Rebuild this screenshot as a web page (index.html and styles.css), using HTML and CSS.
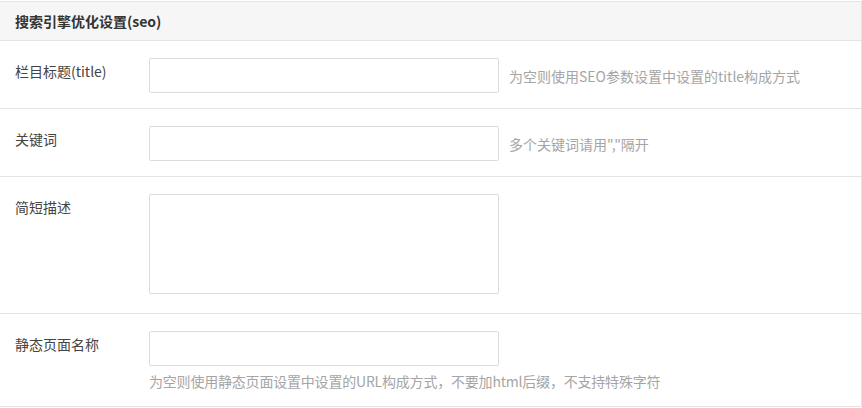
FILE: index.html
```html
<!DOCTYPE html>
<html>
<head>
    <meta charset="utf-8">
    <title>栏目设置</title>
    <link rel="stylesheet" href="styles.css">
</head>
<body>
    <div class="panel">
        <div class="panel-head">搜索引擎优化设置(seo)</div>

        <div class="form-row">
            <label class="form-label">栏目标题(title)</label>
            <div class="form-field">
                <input class="form-input" type="text">
                <span class="form-tip">为空则使用SEO参数设置中设置的title构成方式</span>
            </div>
        </div>

        <div class="form-row">
            <label class="form-label">关键词</label>
            <div class="form-field">
                <input class="form-input" type="text">
                <span class="form-tip">多个关键词请用","隔开</span>
            </div>
        </div>

        <div class="form-row">
            <label class="form-label">简短描述</label>
            <div class="form-field">
                <textarea class="form-input form-textarea"></textarea>
            </div>
        </div>

        <div class="form-row">
            <label class="form-label">静态页面名称</label>
            <div class="form-field form-field-stack">
                <input class="form-input" type="text">
                <span class="form-tip form-tip-below">为空则使用静态页面设置中设置的URL构成方式，不要加html后缀，不支持特殊字符</span>
            </div>
        </div>
    </div>
</body>
</html>
```

FILE: styles.css
```css
body {
    margin: 0;
    background: #fff;
    font-family: "Microsoft YaHei", "Noto Sans CJK SC", "Noto Sans", sans-serif;
    font-size: 14px;
    color: #333;
}

.panel {
    margin: 1px 0 0 -1px;
    border: 1px solid #e4e4e4;
    background: #fff;
}

.panel-head {
    height: 38px;
    line-height: 38px;
    padding-left: 15px;
    background: #f6f6f6;
    border-bottom: 1px solid #e4e4e4;
    font-weight: bold;
    color: #333;
}

.form-row {
    display: flex;
    align-items: flex-start;
    padding: 17px 0 15px;
    border-bottom: 1px solid #e4e4e4;
}

.form-row:last-child {
    border-bottom: none;
}

.form-label {
    width: 134px;
    padding: 3px 0 0 15px;
    line-height: 20px;
    color: #444;
    flex-shrink: 0;
}

.form-field {
    display: flex;
    align-items: center;
}

.form-field-stack {
    flex-direction: column;
    align-items: flex-start;
}

.form-input {
    box-sizing: border-box;
    width: 350px;
    height: 35px;
    margin: 0;
    padding: 0 8px;
    border: 1px solid #dcdcdc;
    border-radius: 2px;
    background: #fff;
    font-family: inherit;
    font-size: 14px;
    outline: none;
}

.form-textarea {
    height: 100px;
    margin-bottom: 4px;
    resize: none;
    display: block;
}

.form-tip {
    margin-left: 10px;
    line-height: 20px;
    color: #a5a5a5;
    white-space: nowrap;
}

.form-tip-below {
    margin: 5px 0 0;
    letter-spacing: -0.2px;
}
```
